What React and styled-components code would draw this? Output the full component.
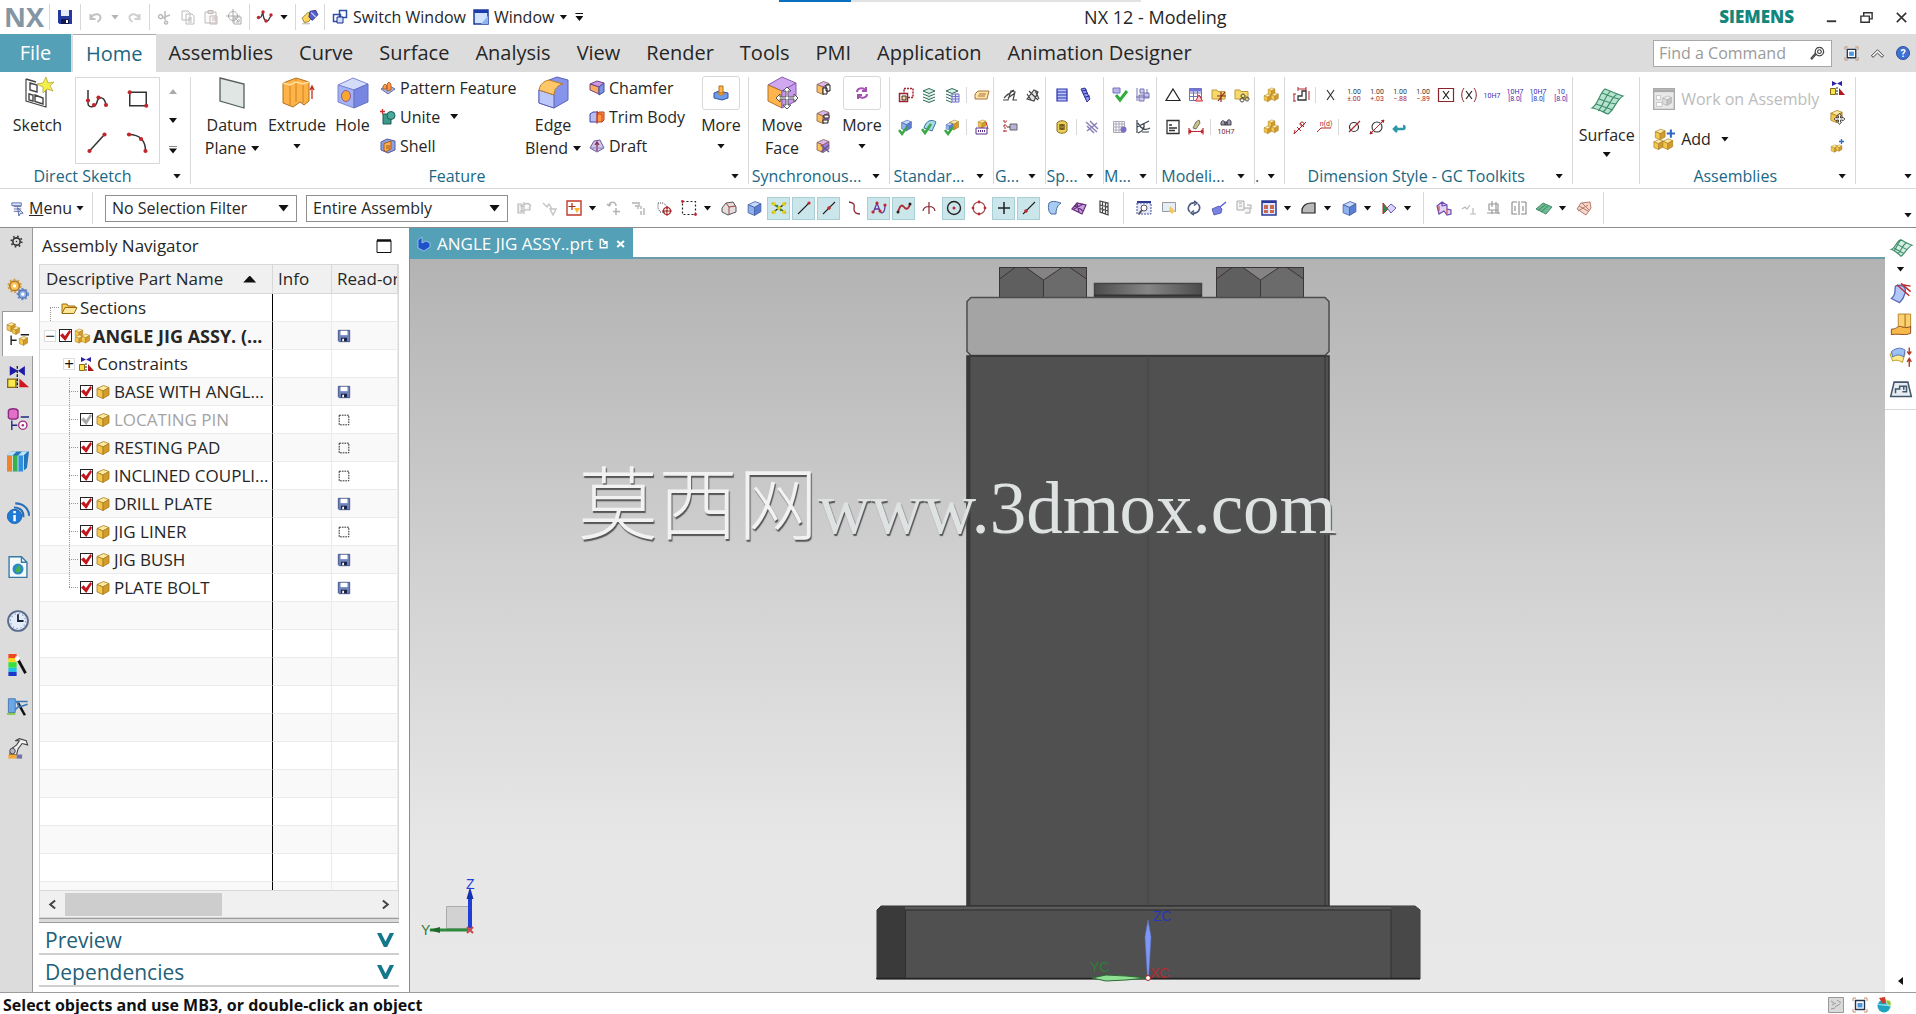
import { useState } from 'react';
import styled, { createGlobalStyle, css } from 'styled-components';

/* ---------- icons ---------- */

const Cube = ({ x = 0, y = 0, s = 16, top = "#fdeaa0", left = "#f3c74e", right = "#d39a2c", line = "#a87c20" }) => (
  <g transform={`translate(${x} ${y}) scale(${s / 16})`} stroke={line} strokeWidth="0.8" strokeLinejoin="round">
    <path d="M2 4.500 8.500 1.500 14 3.500 8 7z" fill={top} />
    <path d="M2 4.500 8 7v7.500L2 12z" fill={left} />
    <path d="M14 3.500 8 7v7.500L14 11z" fill={right} />
  </g>
)

const blueCube = { top: "#c6dbfb", left: "#8db2ee", right: "#5a7fd0", line: "#4a62a8" };
const orangeCube = { top: "#d9b8f2", left: "#ffbe5c", right: "#a97be0", line: "#86604a" };
const greyCube = { top: "#eee", left: "#ddd", right: "#c4c4c4", line: "#aaa" };

const dots = (pts, r = 1.2, fill = "#c0262c") => pts.map(([cx, cy]) => (
  <circle key={`${cx}-${cy}`} cx={cx} cy={cy} r={r} fill={fill} stroke="none" />
))

const tiny = { fontFamily: "Roboto, sans-serif", textAnchor: "middle", stroke: "none" };

const Tol = ({ a, b, color = "#333", color2 = "#b0282c" }) => (
  <>
    <text x="8" y="7" fontSize="7" fill={color} {...tiny}>{a}</text>
    <text x="8" y="14" fontSize="7" fill={color2} {...tiny}>{b}</text>
  </>
)

const glyphs = {
  save: <><path d="M1 1h14v14H2.500L1 13.500z" fill="#26399c" /><path d="M4 1h8v6H4z" fill="#e8ecf8" /><path d="M4 10h8v5H4z" fill="#111a4c" /><path d="M9 11h2v3H9z" fill="#fff" /></>,
  disk: <><path d="M1.500 1.500h13v13h-12l-1-1z" fill="#6f84bd" stroke="#3d4c86" /><path d="M4 2h8v5H4z" fill="#fff" /><path d="M4.500 10h7v4h-7z" fill="#1c2440" /><path d="M6 11h2v3H6z" fill="#fff" /></>,
  ghost: <path d="M2.500 2.500h11v11h-11z" stroke="#111" strokeDasharray="2 1" />,
  undo: <path d="M2.500 5v5h5M3 9.500C5 4 13 4 12.500 9c0 2-1.500 3-3 4" stroke="#c2c2c2" strokeWidth="2" />,
  redo: <path d="M13.500 5v5h-5M13 9.500C11 4 3 4 3.500 9c0 2 1.500 3 3 4" stroke="#cfcfcf" strokeWidth="2" />,
  cut: <path d="M8 2v9M13 6l-8 3M5 9a2 2 0 1 0-.1.1M9 12a1.500 1.500 0 1 0 .1 0" stroke="#bbb" strokeWidth="1.500" />,
  copy: <path d="M2 2h6l2 2v7H2zM6 5h6l2 2v8H6zM8 9h4M8 11h4M8 13h4" fill="#fff" stroke="#bbb" />,
  paste: <path d="M2 3h11v11H2zM5 1.500h5v3H5zM7 7h7v8H7zM9 9h4M9 11h4" fill="#fafafa" stroke="#c4b9b9" />,
  moveObj: <path d="M7 0v14M0 7h14M7 2.500a4.500 4.500 0 1 0 .1 0M8 8h7v7H8zM9 9l4 4M13 10v3h-3" stroke="#aaa" />,
  spline: <><path d="M1 9 4 8 6 3c0 4 1 9 4 9s2-5 5-6" stroke="#3a3a3a" strokeWidth="1.300" />{dots([[1.5, 8.5], [6, 3], [9, 12], [14, 6]], 1.700)}</>,
  splineM: <><path d="M2 13 6 3l3 8c1 3 5 3 5-6M3 9h5" stroke="#66369a" strokeWidth="1.300" />{dots([[2, 12], [6, 3], [9, 11], [14, 5]], 1.6)}</>,
  pen: <><path d="M1 9 6 4l5 2-4 6-4 1z" fill="#ffd65a" stroke="#8d7a3a" strokeWidth=".8" /><path d="M8 3l5-1 2 4-5 5-3-3z" fill="#5560d0" stroke="#2d2f7c" strokeWidth=".8" /><path d="m9 4 4 4" stroke="#cdd0f8" /><path d="M1 14h7" stroke="#bbb" /></>,
  switch: <><path d="M1.500 5.500h7v7h-7zM7.500 1.500h7v7h-7z" fill="#fff" stroke="#2b4fa8" strokeWidth="1.500" /><path d="M5 8h6v6H5z" fill="#cfe0ff" stroke="#1a2c88" /></>,
  windowI: <><path d="M1 1h14v14H1z" fill="#cfe2ff" stroke="#1c3c9c" strokeWidth="1.500" /><path d="M1 1h14v3H1z" fill="#1c3cac" /><path d="M8 15 15 7v8z" fill="#8fb5ee" /></>,
  min: <path d="M3 12h10" stroke="#333" strokeWidth="2" />,
  restore: <path d="M2 6.500h9V13H2zM5 6V3h9v6.500h-3" stroke="#333" strokeWidth="1.500" />,
  close: <path d="m3 3 10 10M13 3 3 13" stroke="#333" strokeWidth="1.700" />,
  search: <path d="M10 1.500a4.500 4.500 0 1 0 .1 0M10 4a2 2 0 1 0 .1 0M6.500 9 2 14l-1-1 4.500-5" stroke="#444" strokeWidth="1.200" />,
  full: <><path d="M1 4V1h3M12 1h3v3M15 12v3h-3M4 15H1v-3" stroke="#c98b66" /><path d="M3.500 3.500h9v9h-9z" fill="#fff" stroke="#25364f" strokeWidth="1.400" /><path d="M5.500 6h5v4.500h-5z" fill="#4e96dc" /></>,
  up: <path d="M1.500 10.500 8 4l6.500 6.500-1.800 1.500L8 7.500 3.300 12z" fill="#fff" stroke="#333" />,
  help: <><circle cx="8" cy="8" r="7.500" fill="#3f6fd0" stroke="#2a4a9c" /><text x="8" y="12.500" fontSize="12" fontWeight="700" fill="#fff" {...tiny}>?</text></>,
  curve: <><path d="M2 2v9c0 3 5 3 6-1s5-4 6 2" stroke="#333" />{dots([[2, 9], [6, 12], [9, 7], [14, 12]], 1.400)}</>,
  rect: <><path d="M2.500 3.500h11v9h-11z" stroke="#333" />{dots([[2.500, 3.500], [13.500, 12.500]], 1.400)}</>,
  line: <><path d="M3 14 13 3" stroke="#333" />{dots([[3, 14], [13, 3]], 1.400)}</>,
  arc: <><path d="M2 3c7 0 11 4 11 11" stroke="#333" />{dots([[2, 3], [10, 6], [13, 14]], 1.400)}</>,
  pattern: <><path d="M1 9 8 5l7 4-7 5z" fill="#a9b6e0" stroke="#6573b4" /><path d="M3 9V6l2-2 2 2v3zM7 11V4l2-2 2 2v6z" fill="#ff9a4a" stroke="#a8541c" strokeWidth=".8" /></>,
  unite: <><path d="M3 5h8v10H3z" fill="#3d9a8b" stroke="#1d5a54" /><circle cx="11" cy="6.500" r="4" fill="#4aab9c" stroke="#1d5a54" /><path d="M2.500 0v5M0 2.500h5" stroke="#d03030" strokeWidth="1.300" /></>,
  shell: <><path d="M1 4l6-3 8 2v9l-7 3-7-3z" fill="#8aa2e6" stroke="#5a5a98" /><path d="M4 5.500 11 3v8l-5 2.500-2-1z" fill="#ffb050" stroke="#a35b1a" /><path d="M6 7h4v4H6z" fill="#d07e30" /></>,
  chamfer: <><path d="M1 4 8 1l7 2-5 4z" fill="#cf95e0" stroke="#70458a" /><path d="M1 4l9 3v7l-9-4z" fill="#f7ab60" stroke="#70458a" /><path d="M10 7l5-4v9l-5 3z" fill="#7a92e8" stroke="#474f98" /></>,
  trim: <><path d="M1 5l3-2h5v10H1z" fill="#b5bff0" stroke="#3a44ac" /><path d="M8 5l2-2h5v8l-2 2H8z" fill="#ff9940" stroke="#b0401c" /><path d="M8 5h5v8M8 2v13" stroke="#c22" strokeWidth=".8" /></>,
  draft: <><path d="M1 10 5 3l6-1 4 8-7 4z" fill="#cfc8ea" stroke="#6b5a9c" /><path d="M8 13V5M6 7l2-3 2 3" stroke="#8a2f54" strokeWidth="1.300" /><path d="M1 10h14" stroke="#8e82bd" /></>,
  moreF: <><path d="M1 8l5-2 9 2v5l-6 2-8-2z" fill="#6f9be4" stroke="#2f55a8" /><path d="M6 1h4v7H6z" fill="#ffb94e" stroke="#b5701a" /><path d="M4 8h8l-4 2.500z" fill="#ff9d2e" stroke="#b5701a" strokeWidth=".6" /></>,
  moreS: <path d="M3 7c0-4 6-5 8-2M13 9c0 4-6 5-8 2M12 2v4H8M4 14v-4h4" stroke="#a352b0" strokeWidth="2" />,
  sync1: <><Cube {...orangeCube} /><path d="M8 8h4v6H8zM11 5h4v6h-4z" fill="#fff" stroke="#222" /></>,
  sync2: <><Cube {...orangeCube} /><path d="M9 6h5v3H9zM8 11h5v3H8z" fill="#fff" stroke="#222" /></>,
  sync3: <><Cube {...orangeCube} /><path d="m6 7 8 7M14 7l-8 7" stroke="#5a5a9c" strokeWidth="1.500" /></>,
  groupSel: <><path d="M6 1.500h9v9H6z" stroke="#a02430" strokeDasharray="2 1" strokeWidth="1.500" /><path d="M1.500 6.500h8v8h-8z" fill="#fff" stroke="#a02430" strokeWidth="1.500" /><path d="M4 9h4v4H4z" fill="#ffd890" stroke="#333" /></>,
  layers: <><path d="M2 4 8 1.500 14 4 8 6.500zM2 7l6 2.500L14 7M2 10l6 2.500 6-2.500M2 13l6 2.500 6-2.500" fill="#d9efe4" stroke="#2f6b57" /></>,
  layers2: <><path d="M2 4 8 1.500 14 4 8 6.500zM2 7l6 2.500L14 7M2 10l6 2.500M2 13l6 2.500" fill="#d9efe4" stroke="#2f6b57" /><path d="M8 7h7v8H8zM8 9.500h7M8 12h7M11.500 7v8" fill="#e5e4ff" stroke="#7274c8" /></>,
  note: <path d="M1 7 4 4h11l-2 8H1zM4 9h7M5 7h7" fill="#ffe2a8" stroke="#a8753a" />,
  chk1: <><Cube x={2} y={0} s={13} {...blueCube} /><path d="m1 11 3 4 5-7" stroke="#3aa845" strokeWidth="2.500" /></>,
  chk2: <><path d="M3 9c2-8 8-9 12-6l-4 9z" fill="#a8d8ea" stroke="#317a98" /><path d="m1 10 3 4 6-9" stroke="#3aa845" strokeWidth="2.500" /></>,
  chk3: <><Cube x={4} y={0} s={12} /><Cube x={1} y={3} s={9} {...blueCube} /><path d="m1 11 3 4 5-7" stroke="#3aa845" strokeWidth="2.500" /></>,
  tag: <><Cube x={3} y={0} s={10} /><path d="M2 9h11v6H2z" fill="#fff" stroke="#5a2f8a" /><path d="M4 12h7" stroke="#5a2f8a" strokeDasharray="1 1" strokeWidth="2" /><path d="m12 3 2 7" stroke="#c22" /></>,
  gear1: <path d="M1 13h5l3-9 4 1-2 8h4M4 9l8-6M6 11l7-5M2 11l4-4" stroke="#444" strokeWidth="1.200" />,
  gear2: <path d="M2 12 9 3l4 2-4 9zM4 4l9 9M2 7l4 6M10 3l4 9" stroke="#444" strokeWidth="1.200" fill="#e2e2e2" />,
  steps: <><path d="M1 2h4M1 7h4M1 12h4M3 2v12" stroke="#a22" strokeDasharray="2 1" /><path d="M8 5h7v6H8z" fill="#b5b3d8" stroke="#666" /><path d="M5 8h3" stroke="#333" /></>,
  spring: <path d="M3 2h10v3H3zM3 5h10v3H3zM3 8h10v3H3zM3 11h10v3H3z" fill="#b9c3fa" stroke="#2b35a8" strokeWidth="1.200" />,
  springT: <path d="m4 2 4-1 5 11-3 3zM5 4l5-1M6 7l5-1M8 10l5-1" fill="#8b96ee" stroke="#2b2f94" />,
  coin: <><path d="M3 4c2-3 8-3 10 0v8c-2 3-8 3-10 0z" fill="#e9cf5c" stroke="#8a6d1c" /><path d="M8 5v6M6 6h4v4H6z" stroke="#6b5210" strokeWidth="1.300" /></>,
  springX: <path d="m2 3 11 10M13 4 3 12M6 2l8 8M3 7l7 7" stroke="#8a80b8" strokeWidth="1.500" />,
  check: <><path d="M1 1h7v5H1z" fill="#b8b4ec" stroke="#7773b8" /><path d="m4 8 4 5 7-9" stroke="#2fae3c" strokeWidth="3" /></>,
  mesh: <path d="M5 2h4v4H5zM9 6h5v5H9zM4 8h5v6H4zM2 1v13M12 2v5M1 10h13" fill="#cdcbf4" stroke="#7773b0" />,
  grid: <><path d="M1.500 2.500h11v11h-11zM1.500 5h11M1.500 8h11M1.500 11h11M4 2.500v11M7 2.500v11M10 2.500v11" stroke="#a9a9b8" /><circle cx="11.500" cy="10.500" r="3" fill="#7e6cc0" /></>,
  plot: <path d="M2 1v13M2 8l12-6M3 4c3 6 7 8 12 5M3 14c4-1 7-5 6-10M7 13h7" stroke="#3a4450" strokeWidth="1.200" />,
  tri: <path d="M8 2 15 13.500H1z" stroke="#222" strokeWidth="1.200" />,
  tbl: <><path d="M1.500 1.500h12v12h-12zM1.500 6h12M1.500 9.500h12M5.500 2v11M9.500 2v11" fill="#fff" stroke="#7274b0" /><path d="M1.500 1.500h12v3h-12z" fill="#7274d8" /><path d="m11 8 3.500 6h-7z" fill="#ffd0c8" stroke="#c23" /></>,
  fold1: <><path d="M1 3h5l1 1.500h7V12H1z" fill="#f7d96a" stroke="#c09a3c" /><path d="M6 9h9M10 5v10M7 14l7-9" stroke="#8a2820" strokeWidth="1.200" /></>,
  fold2: <><path d="M1 3h5l1 1.500h7V12H1z" fill="#f7d96a" stroke="#c09a3c" /><path d="M9 7a2 2 0 1 0 .1 0M13 10a2 2 0 1 0 .1 0M8 11a2 2 0 1 0 .1 0" stroke="#444" /></>,
  text: <path d="M2 1.500h12v13H2zM4 6h3M4 9h8M4 11.500h6" stroke="#333" strokeWidth="1.300" />,
  brush: <><path d="m5 9 3-6 3-2 1 3-4 6z" fill="#c9c58a" stroke="#77745a" /><path d="M1 12.500h14M1 9v6.500M15 9v6.500M3 11l-2 1.500L3 14M13 11l2 1.500-2 1.500" stroke="#c0262c" strokeWidth="1.200" /></>,
  find: <><path d="M3 4c0-3 4-3 4 0v2H3zM9 3c0-3 4-3 4 0v3H9zM7 3h2v3H7z" fill="#9a98b8" stroke="#444" /><text x="8" y="15" fontSize="7" fill="#7a1c22" {...tiny}>10H7</text></>,
  boxes: <><Cube x={4} y={0} s={9} /><Cube x={0} y={6} s={9.5} /><Cube x={7} y={5} s={9.5} /></>,
  dimBox: <><path d="M5 13V9h4V4h4v9z" stroke="#333" strokeWidth="1.300" /><path d="M1 7v7M0 7h3M0 14h3M5 2h8M5 0v4M13 0v4M16 4v9" stroke="#b0282c" /></>,
  x: <path d="m4 3 7 10M11 3 4 13" stroke="#333" strokeWidth="1.200" />,
  tolA: <Tol a="1.00" b="±.00" />,
  tolB: <Tol a="1.00" b="+.03" />,
  tolC: <Tol a="1.00" b="−.88" />,
  tolD: <Tol a="1.00" b="−.89" />,
  boxX: <><path d="M.5 1.500h15v13H.5z" stroke="#8a2430" strokeWidth="1.200" /><path d="m5 4 6 8M11 4l-6 8" stroke="#222" strokeWidth="1.200" /></>,
  parX: <><path d="M3 1C0 5 0 11 3 15M13 1c3 4 3 10 0 14" stroke="#8a2430" /><path d="m5 4 6 8M11 4l-6 8" stroke="#222" strokeWidth="1.200" /></>,
  h7: <text x="8" y="11" fontSize="7" fill="#3a2fb4" {...tiny}>10H7</text>,
  h7b: <Tol a="10H7" b="[8.0]" color="#3a2fb4" color2="#3a2fb4" />,
  h7c: <Tol a="10" b="[8.0]" color="#3a2fb4" color2="#3a2fb4" />,
  leadA: <path d="m1 15 12-12M4 8l4 4M7 4l4 4M1 15l1-4M9 3a2 2 0 1 0 .1 0" stroke="#b0282c" />,
  leadB: <><path d="m1 13 4-4h10" stroke="#b0282c" /><text x="10" y="7" fontSize="7" fill="#b0282c" {...tiny}>n(d)</text></>,
  dia: <><circle cx="8" cy="8" r="4.500" stroke="#333" strokeWidth="1.200" /><path d="M3 13 14 2" stroke="#a8282c" strokeWidth="1.200" /></>,
  dia2: <><circle cx="8" cy="8" r="5" stroke="#333" strokeWidth="1.100" /><path d="M1 15 15 1M1 15l1-3M1 15l3-1M15 1l-1 3M15 1l-3 1" stroke="#a8282c" /></>,
  back: <path d="M2 10h9c2 0 2-3 0-3M5 7l-3 3 3 3" stroke="#2b98a8" strokeWidth="2.500" />,
  constraint: <><path d="M3 1v5l5-2.500L13 6V1L8 3.500z" fill="#2a22a8" /><path d="M1.500 8.500h5v6h-5z" fill="#f7e24a" stroke="#8a6a10" /><path d="M8 7v9" stroke="#222" strokeDasharray="2 1" /><path d="M10 8v7h6z" fill="#b3161a" /></>,
  moveComp: <><Cube s={15} /><path d="m10.500 4.500 2 2.500h-1v2h2V8l2.500 2-2.500 2v-1h-2v2h1l-2 2.500-2-2.500h1v-2h-2v1L5 10l2.500-2v1h2V7h-1z" fill="#fff" stroke="#333" strokeWidth=".8" /></>,
  addComp: <><Cube x={1} y={6} s={9} /><Cube x={6} y={6} s={8} /><path d="M12.500 1v5M10 3.500h5" stroke="#2c68c8" strokeWidth="1.300" /></>,
  menu: <path d="M2 2h10v3H2zM4 6h8M4 8.500h8M4 11h7M8 7l6 6-3 .3L9.500 16z" fill="#dfe6fa" stroke="#5a6aa8" />,
  dim1: <path d="M2 4h4v9H2zM8 2v12M8 5c3-3 6-1 7 1M8 10h6V6M4 6h4M4 11h4" fill="#eee" stroke="#bbb" strokeWidth="1.200" />,
  dim2: <path d="m2 3 4 4 2-3 3 5M9 9h6l-3 6z" stroke="#c4c4c4" strokeWidth="1.400" />,
  filterRed: <><path d="M1 1h14v14H1z" fill="#fff" stroke="#c0392b" strokeWidth="1.400" /><path d="M6 3v7M2.500 6.500h7" stroke="#a8281c" strokeWidth="1.200" /><path d="M8 8h6l-3 5z" fill="#ffb52e" /></>,
  dim3: <path d="M3 6c0-5 7-5 7 0M3 6 1 4M3 6l2-2M10 8v7M7 11.500h7" stroke="#b4b4b4" strokeWidth="1.500" />,
  dim4: <path d="M1 3h7v3H4M10 6v3M13 8v7M10 11v4M7 6v3" stroke="#c4c4c4" strokeWidth="1.800" />,
  lasso: <><path d="M2 3h5l4 3v6H4L2 8z" stroke="#444" strokeDasharray="1 1" /><circle cx="11" cy="11" r="3.500" stroke="#a22" strokeWidth="1.200" /><path d="M11 6v10M6 11h10" stroke="#a22" /></>,
  marquee: <><path d="M1.500 1.500h13v13h-13z" stroke="#222" strokeDasharray="2 2" strokeWidth="1.200" />{dots([[1.500, 1.500], [14.500, 14.500]], 1.400)}</>,
  house: <><path d="M1 8 5 3l7-1 3 5v5l-8 3-6-3z" fill="#e2dede" stroke="#555" /><path d="M5 3l3 4v7M8 7l7-1" stroke="#a24444" /></>,
  solid: <Cube s={17} {...blueCube} />,
  snap: <><path d="m1 3 14 10M1 13 15 3" stroke="#222" strokeWidth="1.200" />{dots([[3, 4], [13, 4], [8, 8], [3, 12], [13, 12]], 2, "#e3cf1c")}{dots([[6, 6], [10, 10]], 1.3, "#388a3c")}</>,
  end: <><path d="M2 14 13 3" stroke="#222" strokeWidth="1.100" />{dots([[13, 3]], 1.6)}</>,
  mid: <><path d="M2 14 14 2" stroke="#222" strokeWidth="1.100" />{dots([[8, 8]], 1.8)}</>,
  mid2: <><path d="M2 14 14 2" stroke="#222" strokeWidth="1.100" />{dots([[5, 11]], 1.8)}</>,
  tang: <path d="M3 2c7 1 5 4 5 7 0 4 2 5 6 5" stroke="#8a2430" strokeWidth="1.300" />,
  knot: <><path d="M2 12c3-10 5-6 7-4s4 0 5-4" stroke="#b0282c" strokeWidth="1.800" />{dots([[2, 12], [14, 4]], 1.500, "#222")}</>,
  cross: <path d="M8 2v12M2 11c1-6 11-6 12 0" stroke="#8a2430" strokeWidth="1.200" />,
  center: <><circle cx="8" cy="8" r="6.500" stroke="#222" strokeWidth="1.400" />{dots([[8, 8]], 1.5)}</>,
  quad: <><circle cx="8" cy="8" r="6" stroke="#a05050" strokeWidth="1.100" />{dots([[8, 2], [8, 14], [2, 8], [14, 8]], 1.400)}</>,
  point: <path d="M8 2v12M2 8h12" stroke="#222" strokeWidth="1.500" />,
  face: <path d="M3 3c4-3 8-1 12 0-3 2-5 5-5 11H5C2 11 2 7 3 3z" fill="#a8ccf4" stroke="#4a6aa4" />,
  facet: <path d="M1 9 6 3l9 2-4 9zM4 5l8 6M3 9l9-5M6 3l2 9" fill="#c3a0e0" stroke="#6a2f7c" strokeWidth="1.200" />,
  gridp: <path d="M4 1l8 2v12l-8-3zM4 5l8 2M4 8.500l8 2.500M6.500 2v11M9.500 2.500V14" stroke="#444" strokeWidth="1.200" />,
  fit: <><path d="M1 3h14v11H1z" fill="#e5e9fc" stroke="#4a5498" strokeDasharray="2 1" /><path d="M1 2h14" stroke="#2c3c98" strokeWidth="2" /><circle cx="8" cy="8" r="3" fill="#fff" stroke="#555" /><path d="m6 10-3 4" stroke="#555" strokeWidth="2" /></>,
  zoomI: <><path d="M1.500 2.500h13v9h-13z" fill="#e5eef4" stroke="#999" /><path d="m9 6 5 5-3 3-3-3z" fill="#f4c860" /></>,
  rot: <path d="M4 12C0 8 4 2 9 3M12 4c4 4 0 10-5 9M8 1l3 2-3 2.500M8 15l-3-2 3-2.500" stroke="#4a5a80" strokeWidth="1.600" />,
  pan: <><path d="m1 9 7-3 3 3-1 4-7 2z" fill="#7a82e4" stroke="#4a52ac" strokeWidth=".8" /><path d="m9 7 6-5" stroke="#5a62d0" strokeWidth="1.500" /></>,
  tree: <path d="M1 1h7v9H1zM3 3h3M3 6h3M8 8h6v5H9M11 5h4v4" fill="#f4f4f4" stroke="#aaa" />,
  views: <><path d="M1 1h14v14H1z" fill="#e0e6ff" stroke="#2a3a98" strokeWidth="1.500" /><path d="M1 2h14" stroke="#2a3a98" strokeWidth="2" /><path d="M3 5h4v4H3zM9 5h4v4H9zM3 10h4v3H3zM9 10h4v3H9z" fill="#c86a4e" /></>,
  shade: <path d="M1 13V9c2-5 6-6 9-6h4v10H1z" fill="#b9b9b9" stroke="#222" strokeWidth="1.200" />,
  orient: <><path d="M2 3v11l5-5z" fill="#2c8a4a" stroke="#a33" /><path d="m10 4 5 4-5 5-4-5z" fill="#dcd4fa" stroke="#6a5ab4" /></>,
  a1: <><path d="m1 6 5-4 5 3v4l4 1v4l-4 1-3-4-5 3zM6 2v4M11 5 6 6" fill="#e4d2f4" stroke="#6a4ab0" strokeWidth="1.200" /><path d="M3 6v5M11 9v5" stroke="#c03a30" /></>,
  a2: <path d="m1 9 3-2 2 2 3-4M12 8v6M9 14h6" stroke="#bbb" strokeWidth="1.200" />,
  a3: <path d="M3 4h9v6H3zM1 13h13M6 10v4M10 2v11M12 10v4M6 1v6" stroke="#999" strokeWidth="1.200" />,
  a4: <path d="M1 2h5M10 2h5M1 2v12h5M15 2v12h-5M8 1v14M4 6v5M12 6v5" stroke="#888" strokeWidth="1.100" />,
  a5: <path d="M0 9 7 3l9 4-6 7zM2 10.500 9 5M5 12l7-6" fill="#6dbb93" stroke="#2d7552" strokeWidth=".8" />,
  a6: <path d="m1 9 4-6 9-1 1 6-5 7zM3 6l9 5M6 3l7 7M2 11l10-6" fill="#f4d8cc" stroke="#b87a6a" />,
  folder: <><path d="M1 13V4h5l1 2h7v2" fill="#f7cf52" stroke="#9a6d14" /><path d="M1 13.500 4 7.500h12l-3 6z" fill="#ffe596" stroke="#9a6d14" /></>,
  part: <Cube s={16} />,
  assy: <><Cube x={0} y={0} s={10} /><Cube x={0} y={6} s={10} /><Cube x={6} y={5} s={11} /></>,
  partTab: <path d="M2 4l4-3v6l4-2 4 2v4l-6 4-6-3z" fill="#1e52c8" stroke="#a8cdf4" strokeWidth=".8" />,
  pinTab: <path d="M7 2H3v11h9V9M7 2v3h5V9M7 9l5-4" stroke="#fff" strokeWidth="1.800" />,
  closeTab: <path d="m3 4 9 8M12 4l-9 8" stroke="#fff" strokeWidth="2.600" />,
  maxi: <><path d="M1 2.500h14v12H1z" fill="#fff" stroke="#111" /><path d="M1 2.500h14" stroke="#111" strokeWidth="2.500" /></>,
  chevL: <path d="m10 3-6 5 6 5" stroke="#444" strokeWidth="2.500" />,
  chevR: <path d="m6 3 6 5-6 5" stroke="#444" strokeWidth="2.500" />,
  expand: <path d="M0 1h4l4 8 4-8h4L9.500 14h-3z" fill="#15788a" />,
  gear: <><circle cx="8" cy="8" r="4.500" stroke="#333" strokeWidth="2" /><circle cx="8" cy="8" r="6.500" stroke="#333" strokeDasharray="2 3.100" strokeWidth="2" />{dots([[8, 8]], 1, "#333")}</>,
  gears: <><circle cx="5.500" cy="5" r="3.500" fill="#f7c558" stroke="#b0792a" strokeWidth="1.200" /><circle cx="5.500" cy="5" r="4.600" stroke="#d69c3a" strokeWidth="1.200" strokeDasharray="1.500 1.400" /><circle cx="5.500" cy="5" r="1.200" fill="#fff" /><circle cx="11.500" cy="11" r="3" fill="#8fb0e4" stroke="#4c6cac" /><circle cx="11.500" cy="11" r="4" stroke="#6288cc" strokeDasharray="1.500 1.400" /><circle cx="11.500" cy="11" r="1.200" fill="#fff" /></>,
  asmNav: <><Cube x={-1} y={-1} s={8} /><Cube x={3} y={2} s={7} /><Cube x={8} y={9} s={8} /><path d="M3 9v7M3 12.500h4M10 8.500h6" stroke="#222" /></>,
  conNav: <><path d="M2 0v7l6-3.500L13 7V0L8 3.500z" fill="#1c1ca8" /><path d="M.5 9.500h6v6h-6z" fill="#f7ea4a" stroke="#8a6a10" /><path d="M7.500 0v16" stroke="#222" strokeDasharray="2 1" /><path d="M9 9v6.500h7z" fill="#d0161a" /></>,
  partNav: <><path d="M1 2c1-2 6-2 7 0v5c-1 1.500-6 1.500-7 0z" fill="#e070c8" stroke="#8a2a80" /><path d="M3.500 9v7M3.500 12.500h4M10 6.500h6" stroke="#222a80" /><circle cx="11.500" cy="12.500" r="3" fill="#fff" stroke="#a02a80" /><circle cx="11.500" cy="12.500" r=".9" fill="#a02a80" /></>,
  books: <><path d="M0 4 3 1h13l-1.500 12-3 2.500H0z" fill="#2476b8" /><path d="M0 4h4v11.500H0z" fill="#f5822a" /><path d="M4 4h4v11.500H4z" fill="#35b34a" /><path d="M8 4h4v11.500H8z" fill="#2f8fe0" /><path d="M0 4 3 1h4L4 4zM8 4l3-3h4l-3 3z" fill="#bfe4ff" /><path d="M4 4v11.500M8 4v11.500M12 4v11.500" stroke="#fff" strokeWidth=".5" /></>,
  info: <><path d="M5 4c5 0 7 3 7 7M6 1c6 0 10 4 10 9" stroke="#2a6fb8" strokeWidth="1.500" /><circle cx="5.500" cy="10.500" r="5.200" fill="#1f7ad8" stroke="#1658a4" strokeWidth=".6" /><path d="M5.500 9.500V14M5.500 6.500v1.700" stroke="#fff" strokeWidth="1.800" /></>,
  web: <><path d="M1.500 .5h9l4 4v11h-13z" fill="#f4fafc" stroke="#3a78a4" /><path d="M10.500.5v4h4" stroke="#3a78a4" /><circle cx="8" cy="9.500" r="4" fill="#2d8ac8" /><path d="M8 7c2-1 3 5 0 5s-1-4 0-5z" fill="#44b04a" /></>,
  clock: <><circle cx="8" cy="8" r="7.200" fill="#e4ecfa" stroke="#5a6c8c" strokeWidth="1.400" /><path d="M8 3v5h4" stroke="#152238" strokeWidth="1.300" /><circle cx="8" cy="8" r="5.500" stroke="#8d9db8" strokeDasharray="1 1.900" strokeWidth=".8" /></>,
  spectrum: <><path d="M1 0h6v4H1z" fill="#f04a1c" /><path d="M1 3h6v3H1z" fill="#f8d820" /><path d="M1 6h6v4H1z" fill="#3ae03a" /><path d="M1 10h6v3H1z" fill="#1cc4e8" /><path d="M1 13h6v3H1z" fill="#1c38c8" /><path d="m8 4 5.500 10" stroke="#111" strokeWidth="2" /><circle cx="7.500" cy="3.500" r="1.800" fill="#fff" /></>,
  wand: <><path d="M1 2h5v10H1z" fill="#6aa8e8" stroke="#3a6cac" strokeWidth=".6" /><path d="M0 13h6" stroke="#8ac84a" strokeWidth="1.500" /><path d="m8 5 5 9" stroke="#111" strokeWidth="1.800" /><path d="M15 4H7l2 4 6-2M9 7l-3 3" stroke="#3a78b8" strokeWidth="1.200" /></>,
  robot: <><path d="M6 2 9 .5l5 1.500 1 3-4-1-3 4-1 4H2l1-4 4-3 2-3z" fill="#f2f2f2" stroke="#444" strokeWidth=".8" /><path d="M1 12h6v3H1z" fill="#f5a83a" /><path d="M7 12h4v3H7z" fill="#7272a8" /><circle cx="4" cy="9.500" r="2" fill="#b8b8cc" stroke="#444" strokeWidth=".7" /></>,
  surf: <path d="M1 9C4 8 5 2 8 2c3 2 5 3 8 4-3 1-5 6-8 8-2-2-4-4-7-5zM3 8c3 2 5 3 7 4M5 5c3 2 5 3 7 4M8 2c-3 3-3 6-5 8M12 4c-3 2-4 6-6 8" fill="#d3eedf" stroke="#3f8d6c" strokeWidth=".8" />,
  r2: <><path d="M4 3c5-2 8 1 7 5s-2 5-4 7L1 12c4-3 2-6 3-9z" fill="#b3c8f8" stroke="#5a6cb8" /><path d="m5 2 9 8M8 1l7 6M9 2l6 1" stroke="#c02a30" /></>,
  r3: <><path d="M6 0h9v10H6z" fill="#fbd070" stroke="#b8862a" strokeWidth=".7" /><path d="M1 11c4 0 4-2 6-2s4 2 8 0v5c-4 2-8 0-14 1z" fill="#f7b94a" stroke="#8a4a20" strokeWidth=".7" /><path d="M11 0v10" stroke="#b8862a" /></>,
  r4: <><path d="M0 6c4-3 7-3 11-1l-2 7c-3-2-5-2-7-1z" fill="#ffe98a" stroke="#b89a30" strokeWidth=".7" /><path d="M1 4c4-3 7-3 10-1l-1 5C7 6 5 6 2 8z" fill="#9cc0f4" stroke="#5070b8" strokeWidth=".7" /><path d="M14 1v5M14 9v6M12.500 4l1.500 2 1.500-2M12.500 11.500 14 9l1.500 2.500" stroke="#b03a20" /></>,
  r5: <path d="M3 3h10l2.500 10.500H.5zM4 11V8h3V6h5v4H9M10 6.500v2" fill="#e6ecf2" stroke="#42566c" strokeWidth="1.100" />,
  st1: <path d="M.5.5h15v15H.5zM3 4l3 2M4 8l4-2M9 3l4 3M12 7l-5 3M3 12l4-1" fill="#d9d9d9" stroke="#999" />,
  st3: <><circle cx="8" cy="9" r="6.500" fill="#1fa3bf" /><path d="M2 7c3 2 9 0 12 2" stroke="#8ce0ee" strokeWidth="1.500" /><path d="M3 1l6-1 1 5-3 2z" fill="#d03a26" /><path d="M10 3c5 0 6 3 4 6l-3-2z" fill="#8cc63f" stroke="#e6f3b0" strokeWidth=".7" /></>,
};

// 32 unit drawings for the large ribbon buttons
const bigGlyphs = {
  sketch: <><path d="M4 2v22l20 6V9" stroke="#444" strokeWidth="1.200" /><path d="M4 2l10 3M8 6l7 2v7l-7-2zM7 17l4 1v6l-4-1zM13 18l8 3v6l-8-2.500z" stroke="#444" strokeWidth="1.400" /><path d="m24 0 2 6 6-1-4 4 3 5-6-2-4 4v-6l-6-3 6-1z" fill="#f2ee4a" stroke="#b0aa3a" strokeWidth=".8" /></>,
  datum: <path d="M4 1l24 6v24L4 24z" fill="#dfe6e4" stroke="#56605e" strokeWidth="1.300" />,
  extrude: <><path d="M2 6 15 1l13 4v19l-5 4-4-3-7 5-10-4z" fill="#ffb245" stroke="#b0701c" /><path d="M9 8v20M15 1v24M22 6v20" stroke="#c8842c" /><path d="M2 6l7 2 6-3 7 2 6-2" stroke="#ffe0a0" strokeWidth="1.500" /><path d="M31 22V10M29 13l2-4 2 4" stroke="#c03020" strokeWidth="1.300" /></>,
  hole: <><path d="M1 8 16 1l15 6-14 6z" fill="#d3dcf9" stroke="#7c86d6" /><path d="M1 8l16 5v18L1 25z" fill="#a3b2f2" stroke="#7c86d6" /><path d="M31 7 17 13v18l14-6z" fill="#7786e0" stroke="#6570c8" /><ellipse cx="9" cy="19" rx="4.500" ry="5.500" fill="#f5a92e" stroke="#9a5a9a" /></>,
  edge: <><path d="M12 3 20 0l11 3v20l-14 8-15-5V13z" fill="#8694ec" stroke="#5a62b8" /><path d="M2 13l15 5v13L2 26z" fill="#bcc8fa" stroke="#5a62b8" /><path d="M2 13C3 7 7 4 12 3l14 4c-5 1-9 5-9 11z" fill="#ffc76a" stroke="#b87a2a" /></>,
  move: <><path d="M2 8 16 0l14 6-14 8z" fill="#cfa8f0" stroke="#8a5ab0" /><path d="M2 8l14 6v17L2 24z" fill="#ffb44c" stroke="#b0742a" /><path d="M30 6 16 14v17l14-7z" fill="#c79af0" stroke="#8a5ab0" /><path d="m21 10 4 4h-3v6h6v-3l4 4-4 4v-3h-6v6h3l-4 4-4-4h3v-6h-6v3l-4-4 4-4v3h6v-6h-3z" fill="#fff" stroke="#555" /></>,
  surface: <path d="M1 22C7 19 9 6 14 3c6 2 11 5 18 7-6 3-9 14-15 18-5-2-10-5-16-6zM5 18c6 2 11 4 17 6M8 13c6 2 11 4 17 5M11 7c6 2 11 5 17 6M20 5c-6 4-7 14-13 20M26 8c-6 4-8 13-14 18" fill="#b5e3cb" stroke="#3f8d6c" strokeWidth="1.200" />,
  work: <><path d="M1 1h30v30H1z" fill="#e9e9e9" stroke="#aaa" strokeWidth="2" /><path d="M1 4h30" stroke="#aaa" strokeWidth="4" /><Cube x={12} y={10} s={17} {...greyCube} /><path d="M5 11h6v6H5zM5 21h8v6H5z" fill="#fff" stroke="#b5b5b5" /></>,
  add: <><Cube x={1} y={0} s={19} /><Cube x={-1} y={15} s={18} /><Cube x={12} y={14} s={19} /><path d="M26 2v12M20 8h12" stroke="#2c68c8" strokeWidth="3" /></>,
};

const Svg = styled.svg`
  display: block;
  flex: none;
  width: ${props => props.$size}px;
  height: ${props => props.$size}px;
  overflow: visible;
`

const Icon = ({ name, size = 16 }) => (
  <Svg viewBox={bigGlyphs[name] ? "0 0 32 32" : "0 0 16 16"} $size={size} fill="none" aria-hidden="true">
    {bigGlyphs[name] || glyphs[name]}
  </Svg>
)

/* ---------- data ---------- */

const menuTabs = ["Assemblies", "Curve", "Surface", "Analysis", "View", "Render", "Tools", "PMI", "Application", "Animation Designer"];

// "|" draws a separator between two icons
const iconGroups = [
  { label: "Standar...", width: 104, rows: [["groupSel", "layers", "layers2", "|", "note"], ["chk1", "chk2", "chk3", "|", "tag"]] },
  { label: "G...", width: 52, rows: [["gear1", "gear2"], ["steps"]] },
  { label: "Sp...", width: 58, rows: [["spring", "springT"], ["coin", "|", "springX"]] },
  { label: "M...", width: 52, rows: [["check", "mesh"], ["grid", "plot"]] },
  { label: "Modeli...", width: 98, rows: [["tri", "tbl", "fold1", "fold2"], ["text", "brush", "|", "find"]] },
  { label: ".", width: 29, rows: [["boxes"], ["boxes"]] },
  {
    label: "Dimension Style - GC Toolkits", width: 288, rows: [
      ["dimBox", "|", "x", "tolA", "tolB", "tolC", "tolD", "boxX", "parX", "h7", "h7b", "h7b", "h7c"],
      ["leadA", "leadB", "|", "dia", "dia2", "back"],
    ]
  },
];

const selectionTools = [
  ["dim1"], ["dim2"], ["filterRed", "menu"], ["dim3"], ["dim4"], ["lasso"], ["marquee", "menu"], ["house"], ["solid"],
  ["snap", "on"], ["end", "on"], ["mid", "on"], ["tang"], ["splineM", "on"], ["knot", "on"], ["cross"], ["center", "on"],
  ["quad"], ["point", "on"], ["mid2", "on"], ["face"], ["facet"], ["gridp"], ["|"],
  ["fit"], ["zoomI"], ["rot"], ["pan"], ["tree"], ["views", "menu"], ["shade", "menu"], ["solid", "menu"], ["orient", "menu"], ["|"],
  ["a1"], ["a2"], ["a3"], ["a4"], ["a5", "menu"], ["a6"], ["|"],
];

const railTabs = ["gears", "asmNav", "conNav", "partNav", "books", "info", "web", "clock", "spectrum", "wand", "robot"];

const parts = [
  { name: "BASE WITH ANGL...", mark: "disk" },
  { name: "LOCATING PIN", mark: "ghost", off: true },
  { name: "RESTING PAD", mark: "ghost" },
  { name: "INCLINED COUPLI...", mark: "ghost" },
  { name: "DRILL PLATE", mark: "disk" },
  { name: "JIG LINER", mark: "ghost" },
  { name: "JIG BUSH", mark: "disk" },
  { name: "PLATE BOLT", mark: "disk" },
];

/* ---------- components ---------- */

const IconRow = ({ items }) => (
  <SmallRow>
    {items.map((item, i) => item === "|"
      ? <CellBar key={i} />
      : <SmallCell key={i} aria-label={item}><Icon name={item} /></SmallCell>)}
  </SmallRow>
)

const Group = ({ label, width, cols, arrow = true, children }) => (
  <RibbonGroup $width={width}>
    <GroupBody $cols={cols}>{children}</GroupBody>
    <GroupFoot>
      <GroupLabel>{label}</GroupLabel>
      {arrow && <ArrowButton $w={24} aria-label={`${label} options`}><Caret /></ArrowButton>}
    </GroupFoot>
  </RibbonGroup>
)

const Big = ({ icon, first, second, drop, framed, size = 32 }) => (
  <BigButton>
    <BigIcon $framed={framed}><Icon name={icon} size={size} /></BigIcon>
    <span>{first}</span>
    {(second || drop) && <BigLine>{second}{drop && <Caret />}</BigLine>}
  </BigButton>
)

function Ribbon() {
  return (
    <RibbonBar>
      <Group label="Direct Sketch" width={191} cols="75px 85px 26px">
        <Big icon="sketch" first="Sketch" />
        <Gallery>
          {["curve", "rect", "line", "arc"].map(name => (
            <PlainButton key={name} aria-label={name}><Icon name={name} size={24} /></PlainButton>
          ))}
        </Gallery>
        <GallerySide>
          <ArrowButton aria-label="Scroll up"><Caret $up /></ArrowButton>
          <ArrowButton aria-label="Scroll down"><Caret /></ArrowButton>
          <ArrowButton aria-label="All curves"><Caret $bar /></ArrowButton>
        </GallerySide>
      </Group>
      <Group label="Feature" width={558} cols="8px 66px 64px 47px 145px 64px 112px 48px">
        <span />
        <Big icon="datum" first="Datum" second="Plane" drop />
        <Big icon="extrude" first="Extrude" drop />
        <Big icon="hole" first="Hole" />
        <SmallColumn>
          <SmallButton><Icon name="pattern" />Pattern Feature</SmallButton>
          <SmallButton><Icon name="unite" />Unite<Caret $gap={6} /></SmallButton>
          <SmallButton><Icon name="shell" />Shell</SmallButton>
        </SmallColumn>
        <Big icon="edge" first="Edge" second="Blend" drop />
        <SmallColumn>
          <SmallButton><Icon name="chamfer" />Chamfer</SmallButton>
          <SmallButton><Icon name="trim" />Trim Body</SmallButton>
          <SmallButton><Icon name="draft" />Draft</SmallButton>
        </SmallColumn>
        <Big icon="moreF" size={16} framed first="More" drop />
      </Group>
      <Group label="Synchronous..." width={141} cols="4px 58px 28px 46px">
        <span />
        <Big icon="move" first="Move" second="Face" />
        <SmallColumn>
          {["sync1", "sync2", "sync3"].map(name => (
            <SmallButton key={name} aria-label={name}><Icon name={name} /></SmallButton>
          ))}
        </SmallColumn>
        <Big icon="moreS" size={16} framed first="More" drop />
      </Group>
      {iconGroups.map(group => (
        <Group key={group.label} label={group.label} width={group.width} cols="1fr">
          <SmallGrid>
            {group.rows.map((row, i) => <IconRow key={i} items={row} />)}
          </SmallGrid>
        </Group>
      ))}
      <Group label="" width={67} cols="1fr" arrow={false}>
        <SurfaceButton>
          <Icon name="surface" size={32} />
          <span>Surface</span>
          <Caret />
        </SurfaceButton>
      </Group>
      <Group label="Assemblies" width={216} cols="185px 28px">
        <AsmColumn>
          <AsmButton disabled><Icon name="work" size={22} />Work on Assembly</AsmButton>
          <AsmButton><Icon name="add" size={22} />Add<Caret $gap={4} /></AsmButton>
        </AsmColumn>
        <SmallColumn>
          {["constraint", "moveComp", "addComp"].map(name => (
            <SmallButton key={name} aria-label={name}><Icon name={name} /></SmallButton>
          ))}
        </SmallColumn>
      </Group>
      <RibbonEnd><ArrowButton aria-label="Ribbon options"><Caret /></ArrowButton></RibbonEnd>
    </RibbonBar>
  )
}

function Navigator() {

  const [checked, setChecked] = useState(["ANGLE", ...parts.map(part => part.name)]);

  const toggle = (name) => {
    setChecked(checked.includes(name) ? checked.filter(item => item !== name) : [...checked, name]);
  }

  return (
    <Panel>
      <PanelTitle>
        Assembly Navigator
        <PlainButton aria-label="Maximize"><Icon name="maxi" /></PlainButton>
      </PanelTitle>
      <TableBox>
        <Table>
          <colgroup><col width="233" /><col width="59" /><col /></colgroup>
          <thead>
            <tr>
              <th><HeadLine>Descriptive Part Name<SortMark /></HeadLine></th>
              <th>Info</th>
              <th>Read-or</th>
            </tr>
          </thead>
          <tbody>
            <tr>
              <td><TreeLine $pad={10}><Branch $first /><Icon name="folder" /><RowText>Sections</RowText></TreeLine></td>
              <td /><td />
            </tr>
            <tr>
              <td>
                <TreeLine $pad={4}>
                  <Expander aria-label="Collapse">−</Expander>
                  <Check type="checkbox" aria-label="ANGLE JIG ASSY." checked={checked.includes("ANGLE")} onChange={() => toggle("ANGLE")} />
                  <Icon name="assy" />
                  <RowText $bold>ANGLE JIG ASSY. (...</RowText>
                </TreeLine>
              </td>
              <td />
              <td><Icon name="disk" size={14} /></td>
            </tr>
            <tr>
              <td>
                <TreeLine $pad={23}>
                  <Expander aria-label="Expand">+</Expander>
                  <Icon name="constraint" />
                  <RowText>Constraints</RowText>
                </TreeLine>
              </td>
              <td /><td />
            </tr>
            {parts.map((part, i) => (
              <tr key={part.name}>
                <td>
                  <TreeLine $pad={29}>
                    <Branch $last={i === parts.length - 1} />
                    <Check
                      type="checkbox"
                      aria-label={part.name}
                      $off={part.off}
                      checked={checked.includes(part.name)}
                      onChange={() => toggle(part.name)}
                    />
                    <Icon name="part" />
                    <RowText $off={part.off}>{part.name}</RowText>
                  </TreeLine>
                </td>
                <td />
                <td><Icon name={part.mark} size={14} /></td>
              </tr>
            ))}
            {Array.from({ length: 11 }, (_, i) => <tr key={i}><td /><td /><td /></tr>)}
          </tbody>
        </Table>
      </TableBox>
      <ScrollBar>
        <PlainButton aria-label="Scroll left"><Icon name="chevL" size={13} /></PlainButton>
        <ScrollTrack><ScrollThumb /></ScrollTrack>
        <PlainButton aria-label="Scroll right"><Icon name="chevR" size={13} /></PlainButton>
      </ScrollBar>
      <Splitter />
      <Fold>Preview<Icon name="expand" size={17} /></Fold>
      <Fold>Dependencies<Icon name="expand" size={17} /></Fold>
    </Panel>
  )
}

const Bolt = ({ x }) => (
  <g transform={`translate(${x} 0)`} stroke="#3a3638">
    <path d="M.5.5h87v30H.5z" fill="#6b6b6b" />
    <path d="M.5.5h44v30H.5z" fill="#5f5f5f" stroke="none" />
    <path d="M27 .5h36L44.500 13z" fill="#858384" stroke="none" />
    <path d="M.5 .5H16L.5 12zM87.500 .5H71l16.500 11.500z" fill="#676466" />
    <path d="M27 .5 44.500 13 63 .5M44.500 13v17" />
    <path d="M.5 30V.5h87V30" />
  </g>
)

function Model() {
  return (
    <ModelSvg viewBox="0 0 544 712" fill="none">
      <defs>
        <linearGradient id="washer">
          <stop offset="0" stopColor="#4c4c4c" />
          <stop offset=".5" stopColor="#868686" />
          <stop offset="1" stopColor="#4c4c4c" />
        </linearGradient>
      </defs>
      <Bolt x={123} />
      <Bolt x={340} />
      <path d="M218.500 16.500h107v13h-107z" fill="url(#washer)" stroke="#444" strokeWidth="1.500" />
      <path d="M218 28.500h108" stroke="#333" strokeWidth="2" />
      <path d="M95 30.500h354l4 4v50l-4 4h-354l-4-4v-50z" fill="#a4a4a4" stroke="#4c4c4c" strokeWidth="1.500" />
      <path d="M91 89h362v550H91z" fill="#505050" stroke="#303030" strokeWidth="1.500" />
      <path d="M93 89v550" stroke="#383838" strokeWidth="3" />
      <path d="M449 89v550" stroke="#303030" />
      <path d="M272 89v550" stroke="#444" />
      <path d="M1 643l4-4h534l5 4v69H1z" fill="#505050" stroke="#333" />
      <path d="M1 643l4-4h24v73H1z" fill="#3a3a3a" />
      <path d="M515 639h24l5 4v69h-29z" fill="#484848" />
      <path d="M29 643h486M29.500 643v68M515 643v68" stroke="#303030" />
      <path d="M29 641h486" stroke="#666" />
      <path d="M0 711.500h544" stroke="#222" strokeWidth="1.500" />
      <path d="M272 653l3 17-2.500 41h-1l-2.500-41z" fill="#7f97f4" stroke="#5a74dc" strokeWidth=".5" />
      <path d="M216 711l14-3 20 1 21 2-21 2-20 1z" fill="#8fdf94" stroke="#2f6b34" />
      <circle cx="272" cy="711" r="2.500" fill="#fff" stroke="#a82020" />
      <AxisText x="277" y="654" fill="#2438b8">ZC</AxisText>
      <AxisText x="214" y="705" fill="#2f7d36">YC</AxisText>
      <AxisText x="274" y="711" fill="#b52a30">XC</AxisText>
    </ModelSvg>
  )
}

const Triad = () => (
  <TriadSvg viewBox="0 0 56 62" fill="none">
    <path d="M25.500 30.500h22v22h-22z" fill="#d2d2d2" stroke="#aaa" />
    <path d="M9 54h38" stroke="#2f8a3c" strokeWidth="3" />
    <path d="m8 54 11-3v6z" fill="#1f6a2c" />
    <path d="M49 52V18" stroke="#1f3fd8" strokeWidth="4" />
    <path d="m49 11 3.500 12h-7z" fill="#1630b0" />
    <path d="m46 51 6 6M52 51l-6 6" stroke="#c8444a" strokeWidth="2" />
    <AxisText x="45" y="13" fill="#1f3fd8">Z</AxisText>
    <AxisText x="0" y="59" fill="#2f7d36">Y</AxisText>
  </TriadSvg>
)

function App() {

  const [railTab, setRailTab] = useState("asmNav");
  const [filter, setFilter] = useState("No Selection Filter");
  const [scope, setScope] = useState("Entire Assembly");

  return (
    <>
      <GlobalStyle />
      <Shell>
        <TitleBar>
          <Logo>NX</Logo>
          <QuickBar>
            <QuickSet><Icon name="save" /></QuickSet>
            <QuickSet><Icon name="undo" /><Caret $soft /><Icon name="redo" /></QuickSet>
            <QuickSet><Icon name="cut" /><Icon name="copy" /><Icon name="paste" /><Icon name="moveObj" /></QuickSet>
            <QuickSet><Icon name="spline" /><Caret /></QuickSet>
            <QuickSet><Icon name="pen" size={18} /></QuickSet>
          </QuickBar>
          <WindowButton><Icon name="switch" />Switch Window</WindowButton>
          <WindowButton><Icon name="windowI" />Window<Caret /></WindowButton>
          <ArrowButton $w={24} aria-label="Customize"><Caret $bar /></ArrowButton>
          <Progress><ProgressDone /></Progress>
          <AppTitle>NX 12 - Modeling</AppTitle>
          <Brand>SIEMENS</Brand>
          <WindowControls>
            <PlainButton aria-label="Minimize"><Icon name="min" size={15} /></PlainButton>
            <PlainButton aria-label="Restore"><Icon name="restore" size={15} /></PlainButton>
            <PlainButton aria-label="Close"><Icon name="close" size={15} /></PlainButton>
          </WindowControls>
        </TitleBar>

        <MenuBar>
          <FileTab>File</FileTab>
          <MenuTab $active>Home</MenuTab>
          {menuTabs.map(name => <MenuTab key={name}>{name}</MenuTab>)}
          <Find>
            <FindInput placeholder="Find a Command" aria-label="Find a Command" />
            <Icon name="search" size={15} />
          </Find>
          <MenuIcons>
            <PlainButton aria-label="Full screen"><Icon name="full" size={15} /></PlainButton>
            <PlainButton aria-label="Minimize ribbon"><Icon name="up" size={15} /></PlainButton>
            <PlainButton aria-label="Help"><Icon name="help" size={14} /></PlainButton>
          </MenuIcons>
        </MenuBar>

        <Ribbon />

        <SelectionBar>
          <MenuButton><Icon name="menu" size={15} /><span><u>M</u>enu</span><Caret /></MenuButton>
          <SelectBox $w={192}>
            <select aria-label="Selection filter" value={filter} onChange={(e) => setFilter(e.target.value)}>
              <option>No Selection Filter</option>
            </select>
            <Caret $large />
          </SelectBox>
          <SelectBox $w={202}>
            <select aria-label="Selection scope" value={scope} onChange={(e) => setScope(e.target.value)}>
              <option>Entire Assembly</option>
            </select>
            <Caret $large />
          </SelectBox>
          <ToolRow>
            {selectionTools.map(([name, mode], i) => name === "|"
              ? <ToolBar key={i} />
              : (
                <Tool key={i} aria-label={name} $on={mode === "on"} $menu={mode === "menu"}>
                  <Icon name={name} />
                  {mode === "menu" && <Caret />}
                </Tool>
              ))}
          </ToolRow>
          <BarEnd><ArrowButton aria-label="Toolbar options"><Caret /></ArrowButton></BarEnd>
        </SelectionBar>

        <Main>
          <Rail>
            <GearButton aria-label="Resource bar options"><Icon name="gear" size={13} /></GearButton>
            {railTabs.map(name => (
              <RailTab
                key={name}
                aria-label={name}
                $active={railTab === name}
                $tall={["info", "web", "clock"].includes(name)}
                onClick={() => setRailTab(name)}
              >
                <Icon name={name} size={22} />
              </RailTab>
            ))}
          </Rail>
          <Navigator />
          <Work>
            <DocTabs>
              <DocTab>
                <Icon name="partTab" />
                ANGLE JIG ASSY..prt
                <Icon name="pinTab" size={12} />
                <Icon name="closeTab" size={12} />
              </DocTab>
            </DocTabs>
            <Viewport>
              <Model />
              <Watermark><WatermarkWide>莫西网</WatermarkWide>www.3dmox.com</Watermark>
              <Triad />
            </Viewport>
          </Work>
          <SideTools>
            <SideSet>
              <PlainButton aria-label="Surface"><Icon name="surf" size={22} /></PlainButton>
              <SideArrow aria-label="More surfaces"><Caret /></SideArrow>
              {["r2", "r3", "r4", "r5"].map(name => (
                <SideButton key={name} aria-label={name}><Icon name={name} size={22} /></SideButton>
              ))}
            </SideSet>
            <ArrowButton aria-label="Collapse"><Caret $left /></ArrowButton>
          </SideTools>
        </Main>

        <StatusBar>
          <span>Select objects and use MB3, or double-click an object</span>
          <StatusIcons>
            <Icon name="st1" />
            <Icon name="full" />
            <Icon name="st3" />
          </StatusIcons>
        </StatusBar>
      </Shell>
    </>
  )
}

export default App

/* ---------- styles ---------- */

const teal = "#1a6784";
const border = "#d8d8d8";

const GlobalStyle = createGlobalStyle`
  * {
    box-sizing: border-box;
  }
  body {
    margin: 0;
    background: #fff;
    color: #262626;
    font-family: "Open Sans", "Noto Sans", sans-serif;
    font-size: 16px;
    line-height: 22px;
  }
  button, input, select {
    font: inherit;
    color: inherit;
    margin: 0;
    padding: 0;
    border: none;
    background: none;
  }
`

const Shell = styled.div`
  height: 100vh;
  display: flex;
  flex-direction: column;
  overflow: hidden;
`

const Caret = styled.span`
  display: block;
  flex: none;
  width: 8px;
  height: 5px;
  margin-left: ${props => props.$gap || 0}px;
  background: #111;
  clip-path: polygon(0 0, 100% 0, 50% 100%);
  ${props => props.$soft && css`
    background: #b4b4b4;
  `}
  ${props => props.$up && css`
    background: #aaa;
    clip-path: polygon(0 100%, 100% 100%, 50% 0);
  `}
  ${props => props.$bar && css`
    height: 8px;
    clip-path: polygon(0 0, 100% 0, 100% 1px, 0 1px, 0 3px, 100% 3px, 50% 100%, 0 3px);
  `}
  ${props => props.$left && css`
    width: 5px;
    height: 8px;
    clip-path: polygon(100% 0, 100% 100%, 0 50%);
  `}
  ${props => props.$large && css`
    width: 11px;
    height: 7px;
  `}
`

const PlainButton = styled.button`
  display: flex;
  align-items: center;
  justify-content: center;
`

const ArrowButton = styled(PlainButton)`
  width: ${props => props.$w || 16}px;
  height: 16px;
`

const TitleBar = styled.header`
  height: 34px;
  flex: none;
  display: flex;
  align-items: center;
  padding-right: 7px;
  position: relative;
`

const Logo = styled.div`
  width: 49px;
  padding-left: 4px;
  font-size: 27px;
  line-height: 34px;
  font-weight: 700;
  color: #8496a3;
`

const QuickBar = styled.div`
  display: flex;
`

const QuickSet = styled.div`
  height: 26px;
  display: flex;
  align-items: center;
  gap: 7px;
  padding: 0 7px;
  border-left: 1px solid ${border};
  &:last-child {
    padding: 0 5px;
    border-right: 1px solid ${border};
  }
`

const WindowButton = styled.button`
  display: flex;
  align-items: center;
  gap: 5px;
  padding-left: 7px;
`

const Progress = styled.div`
  position: absolute;
  top: 0;
  left: 779px;
  width: 362px;
  height: 2px;
  background: #e2e2e2;
`

const ProgressDone = styled.div`
  width: 72px;
  height: 2px;
  background: #0b6fc0;
`

const AppTitle = styled.div`
  flex: 1;
  text-align: center;
  font-size: 18px;
`

const Brand = styled.div`
  color: #12867c;
  font-weight: 800;
  font-size: 17px;
`

const WindowControls = styled.div`
  display: flex;
  gap: 20px;
  margin-left: 30px;
`

const MenuBar = styled.nav`
  height: 38px;
  flex: none;
  display: flex;
  background: #dcdcdc;
  padding-right: 6px;
  align-items: center;
`

const MenuTab = styled.button`
  height: 38px;
  padding: 0 13px;
  font-size: 20px;
  ${props => props.$active && css`
    background: #fff;
    color: ${teal};
    border-top: 1px solid #aaa;
    margin-left: 2px;
  `}
`

const FileTab = styled.button`
  width: 71px;
  height: 38px;
  font-size: 20px;
  color: #fff;
  background: #54a0b6;
`

const Find = styled.label`
  width: 179px;
  height: 27px;
  margin-left: auto;
  padding: 0 6px 0 5px;
  display: flex;
  align-items: center;
  background: #fff;
  border: 1px solid #a8a8a8;
`

const FindInput = styled.input`
  flex: 1;
  min-width: 0;
  outline: none;
  &::placeholder {
    color: #9a9a9a;
    opacity: 1;
  }
`

const MenuIcons = styled.div`
  display: flex;
  gap: 11px;
  margin-left: 12px;
`

const RibbonBar = styled.section`
  flex: none;
  height: 117px;
  display: flex;
  border-bottom: 1px solid ${border};
`

const RibbonGroup = styled.div`
  flex: 0 0 ${props => props.$width}px;
  padding-top: 1px;
  display: flex;
  flex-direction: column;
  background: linear-gradient(${border}, ${border}) 100% 5px / 1px 107px no-repeat;
`

const GroupBody = styled.div`
  height: 92px;
  display: grid;
  grid-template-columns: ${props => props.$cols};
`

const GroupFoot = styled.div`
  display: flex;
  align-items: center;
  padding-right: 2px;
  color: ${teal};
`

const GroupLabel = styled.span`
  flex: 1;
  min-width: 0;
  text-align: center;
  white-space: nowrap;
`

const BigButton = styled.button`
  display: flex;
  flex-direction: column;
  align-items: center;
  line-height: 23px;
  white-space: nowrap;
`

const BigIcon = styled.span`
  display: flex;
  align-items: center;
  justify-content: center;
  width: 38px;
  height: 34px;
  margin: 3px 0 4px;
  border-radius: 3px;
  border: 1px solid ${props => props.$framed ? border : "transparent"};
`

const BigLine = styled.span`
  display: flex;
  align-items: center;
  gap: 5px;
  min-height: 18px;
`

const Gallery = styled.div`
  display: grid;
  grid-template-columns: 1fr 1fr;
  margin-top: 4px;
  height: 87px;
  border: 1px solid ${border};
`

const GallerySide = styled.div`
  height: 91px;
  padding-top: 4px;
  display: flex;
  flex-direction: column;
  align-items: center;
  justify-content: space-around;
`

const SmallColumn = styled.div`
  display: grid;
  grid-template-rows: repeat(3, 29px);
  padding-left: 4px;
`

const SmallButton = styled.button`
  display: flex;
  align-items: center;
  gap: 4px;
  white-space: nowrap;
`

const SmallGrid = styled.div`
  padding: 6px 0 0 4px;
`

const SmallRow = styled.div`
  display: flex;
  height: 32px;
`

const SmallCell = styled(PlainButton)`
  width: 23px;
`

const CellBar = styled.span`
  width: 7px;
  margin: 8px 0;
  background: linear-gradient(${border}, ${border}) 50% 0 / 1px 100% no-repeat;
`

const SurfaceButton = styled.button`
  display: flex;
  flex-direction: column;
  align-items: center;
  justify-content: center;
  gap: 6px;
  padding-top: 5px;
`

const AsmColumn = styled.div`
  display: grid;
  grid-template-rows: 40px 40px;
  align-content: center;
  padding-left: 13px;
`

const AsmButton = styled.button`
  display: flex;
  align-items: center;
  gap: 6px;
  white-space: nowrap;
  &:disabled {
    color: #bcbcbc;
  }
`

const RibbonEnd = styled.div`
  flex: 1;
  display: flex;
  align-items: flex-end;
  justify-content: flex-end;
  padding-bottom: 4px;
`

const SelectionBar = styled.section`
  flex: none;
  height: 39px;
  display: flex;
  align-items: center;
  border-bottom: 1px solid #8c8c8c;
`

const MenuButton = styled.button`
  width: 93px;
  height: 32px;
  margin-right: 3px;
  padding-left: 10px;
  display: flex;
  align-items: center;
  gap: 4px;
  border-right: 1px solid ${border};
`

const SelectBox = styled.div`
  width: ${props => props.$w}px;
  height: 27px;
  margin-left: 9px;
  display: grid;
  align-items: center;
  border: 1px solid #8f8f8f;
  select {
    grid-area: 1 / 1;
    height: 25px;
    padding-left: 6px;
    appearance: none;
  }
  ${Caret} {
    grid-area: 1 / 1;
    justify-self: end;
    margin-right: 7px;
    pointer-events: none;
  }
`

const ToolRow = styled.div`
  display: flex;
  align-items: center;
  gap: 2px;
  margin-left: 4px;
`

const Tool = styled(PlainButton)`
  width: ${props => props.$menu ? 38 : 23}px;
  height: 23px;
  gap: 7px;
  ${props => props.$on && css`
    background: #cbe6ea;
    border: 1px solid #a9cfd6;
  `}
`

const ToolBar = styled.span`
  width: 1px;
  height: 32px;
  margin: 0 6px;
  background: ${border};
`

const BarEnd = styled.div`
  margin-left: auto;
  align-self: flex-end;
  padding-bottom: 4px;
`

const Main = styled.main`
  flex: 1;
  min-height: 0;
  display: flex;
`

const Rail = styled.aside`
  width: 33px;
  flex: none;
  display: flex;
  flex-direction: column;
  background: #dcdcdc;
  border-right: 1px solid #9a9a9a;
`

const GearButton = styled(PlainButton)`
  height: 27px;
  margin-bottom: 14px;
`

const RailTab = styled(PlainButton)`
  height: ${props => props.$tall ? 54 : 42}px;
  padding-left: 3px;
  ${props => props.$tall && css`
    padding-top: 8px;
  `}
  ${props => props.$active && css`
    height: 45px;
    margin: 0 -1px 0 2px;
    padding-left: 0;
    background: #fff;
    border-top: 1px solid #999;
    border-left: 1px solid #999;
  `}
`

const Panel = styled.section`
  width: 377px;
  flex: none;
  display: flex;
  flex-direction: column;
  padding: 0 10px 5px 6px;
  border-right: 1px solid #8c8c8c;
`

const PanelTitle = styled.h2`
  margin: 0;
  padding: 0 7px 0 3px;
  height: 36px;
  flex: none;
  display: flex;
  align-items: center;
  justify-content: space-between;
  font-size: 17px;
  font-weight: 400;
`

const TableBox = styled.div`
  flex: 1 1 0;
  min-height: 0;
  overflow: hidden;
  font-size: 17px;
  border: 1px solid ${border};
  border-bottom: none;
`

const Table = styled.table`
  width: 100%;
  table-layout: fixed;
  border-collapse: separate;
  border-spacing: 0;
  th {
    height: 29px;
    padding: 0 0 0 5px;
    text-align: left;
    font-weight: 400;
    background: #f0f0f0;
    border-right: 1px solid ${border};
    border-bottom: 1px solid ${border};
    overflow: hidden;
    white-space: nowrap;
  }
  td {
    height: 28px;
    padding: 0;
    border-right: 1px solid #ebebeb;
    border-bottom: 1px solid #ebebeb;
    white-space: nowrap;
  }
  td:first-child {
    border-right: 1px solid #000;
  }
  td:last-child {
    padding-left: 5px;
  }
  tbody tr:nth-child(even) {
    background: #f9f9f9;
  }
`

const HeadLine = styled.div`
  display: flex;
  align-items: center;
  gap: 20px;
  padding-left: 1px;
`

const SortMark = styled.span`
  width: 13px;
  height: 7px;
  background: #111;
  clip-path: polygon(0 100%, 100% 100%, 50% 0);
`

const TreeLine = styled.div`
  height: 27px;
  display: flex;
  align-items: center;
  gap: 2px;
  padding-left: ${props => props.$pad}px;
`

const Branch = styled.span`
  width: 9px;
  align-self: stretch;
  background:
    repeating-linear-gradient(180deg, #999 0 1px, transparent 1px 2px) 0 ${props => props.$first ? "100%" : "0"} / 1px ${props => props.$first || props.$last ? "50%" : "100%"} no-repeat,
    repeating-linear-gradient(90deg, #999 0 1px, transparent 1px 2px) 0 50% / 100% 1px no-repeat;
`

const Expander = styled.button`
  width: 12px;
  height: 12px;
  margin-right: 1px;
  line-height: 10px;
  color: #111;
  border: 1px solid #ddd;
  background: #fff;
  display: flex;
  align-items: center;
  justify-content: center;
`

const Check = styled.input`
  appearance: none;
  flex: none;
  width: 13px;
  height: 13px;
  border: 1px solid #222;
  background: #fff;
  display: grid;
  &:checked::after {
    content: "";
    background: ${props => props.$off ? "#aaa" : "#c4161c"};
    clip-path: polygon(0 50%, 25% 30%, 45% 55%, 85% 0, 100% 15%, 48% 100%);
  }
`

const RowText = styled.span`
  padding-left: 1px;
  font-size: ${props => props.$bold ? 18 : 17}px;
  font-weight: ${props => props.$bold ? 700 : 400};
  color: ${props => props.$off ? "#a4a4a4" : "inherit"};
`

const ScrollBar = styled.div`
  flex: none;
  height: 28px;
  display: flex;
  align-items: center;
  padding: 0 7px;
  background: #f0f0f0;
  border: 1px solid ${border};
`

const ScrollTrack = styled.div`
  flex: 1;
  padding: 0 5px;
`

const ScrollThumb = styled.div`
  width: 51%;
  height: 23px;
  background: #cdcdcd;
`

const Splitter = styled.div`
  flex: none;
  height: 5px;
  background: #dadada;
  border-top: 1px solid #9c9c9c;
  border-bottom: 1px solid #9c9c9c;
`

const Fold = styled.button`
  flex: none;
  height: 32px;
  padding: 4px 5px 0 6px;
  display: flex;
  align-items: center;
  justify-content: space-between;
  font-size: 21px;
  color: #235f78;
  border-bottom: 2px solid #cfcfcf;
`

const Work = styled.section`
  flex: 1;
  min-width: 0;
  display: flex;
  flex-direction: column;
`

const DocTabs = styled.div`
  height: 31px;
  flex: none;
  display: flex;
  border-bottom: 2px solid #6b9dab;
`

const DocTab = styled.button`
  height: 31px;
  padding: 0 6px;
  display: flex;
  align-items: center;
  gap: 5px;
  font-size: 17px;
  color: #fff;
  background: #54a0b6;
`

const Viewport = styled.div`
  flex: 1;
  min-height: 0;
  position: relative;
  display: flex;
  align-items: flex-end;
  justify-content: center;
  padding-bottom: 13px;
  background: linear-gradient(#b3b3b3, #d2d2d2 44%, #e7e7e7 80%, #e8e8e8);
`

const ModelSvg = styled.svg`
  display: block;
  width: 544px;
  height: 712px;
  overflow: visible;
`

const AxisText = styled.text`
  font-family: "Liberation Sans", sans-serif;
  font-size: 14px;
`

const Watermark = styled.div`
  position: absolute;
  top: 189px;
  left: 168px;
  display: flex;
  align-items: baseline;
  font-family: "Liberation Serif", serif;
  font-size: 73px;
  line-height: 100px;
  color: #dfe2e2;
  text-shadow: 1px 2px 1px #555;
  white-space: nowrap;
  pointer-events: none;
`

const WatermarkWide = styled.span`
  font-family: "Noto Sans CJK SC", sans-serif;
  font-size: 80px;
  font-weight: 300;
  color: #f2f2f2;
`

const TriadSvg = styled.svg`
  position: absolute;
  left: 11px;
  bottom: 54px;
  width: 56px;
  height: 62px;
`

const SideTools = styled.aside`
  width: 31px;
  flex: none;
  display: flex;
  flex-direction: column;
  align-items: center;
  justify-content: space-between;
  padding-bottom: 3px;
`

const SideSet = styled.div`
  width: 100%;
  display: flex;
  flex-direction: column;
  align-items: center;
  gap: 4px;
  padding: 9px 0 6px;
  border-bottom: 1px solid ${border};
`

const SideButton = styled(PlainButton)`
  height: 28px;
`

const SideArrow = styled(PlainButton)`
  height: 12px;
`

const StatusBar = styled.footer`
  flex: none;
  height: 22px;
  padding: 2px 24px 0 3px;
  display: flex;
  align-items: center;
  justify-content: space-between;
  font-weight: 700;
  line-height: 20px;
  color: #111;
  border-top: 1px solid #9c9c9c;
`

const StatusIcons = styled.div`
  display: flex;
  gap: 8px;
`
